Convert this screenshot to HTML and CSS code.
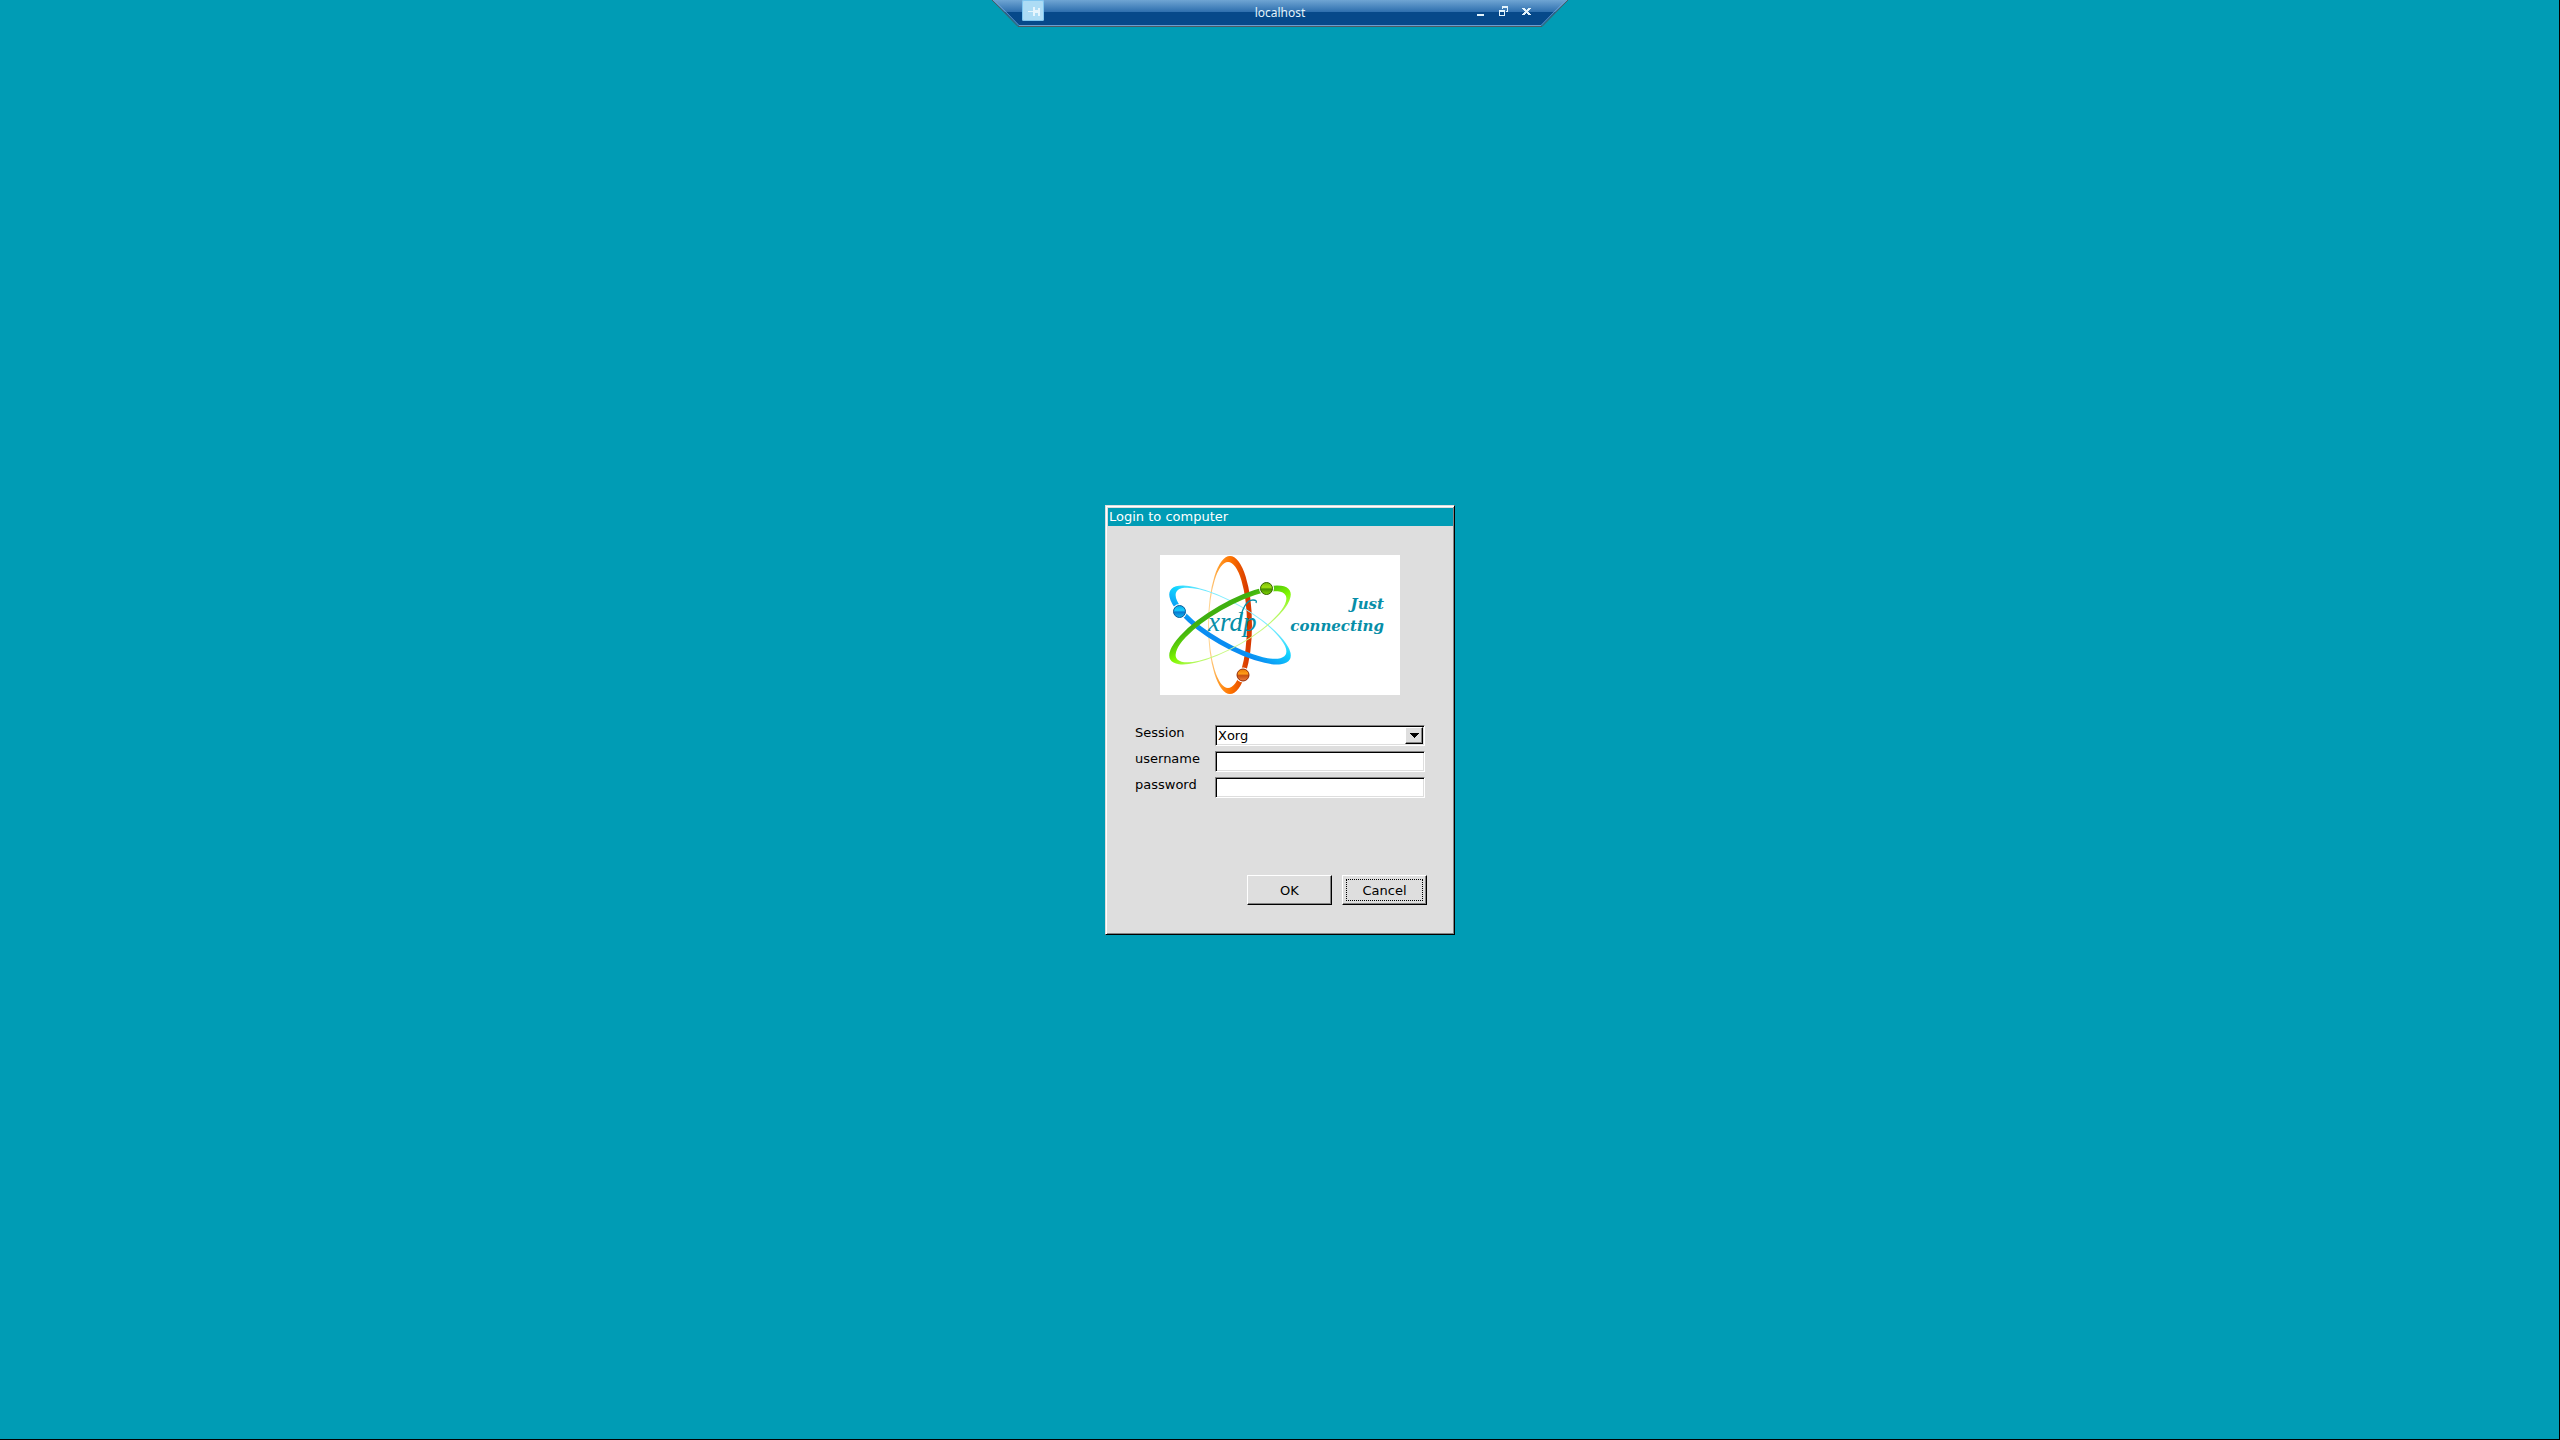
FILE: index.html
```
<!DOCTYPE html>
<html lang="en">
<head>
<meta charset="utf-8">
<title>localhost</title>
<link rel="stylesheet" href="styles.css">
</head>
<body class="desktop">
<header class="conn-bar">
  <svg class="conn-shape" viewBox="0 0 576 27" aria-hidden="true">
    <defs>
      <linearGradient id="bar" x1="0" y1="0" x2="0" y2="1">
        <stop offset="0" stop-color="#6fa5d3"/>
        <stop offset=".47" stop-color="#2e6fae"/>
        <stop offset=".47" stop-color="#06498a"/>
        <stop offset="1" stop-color="#06498a"/>
      </linearGradient>
    </defs>
    <path d="M0 0H576L550 25.500H26Z" fill="url(#bar)"/>
    <path d="M0 0L26 26.500H550L576 0" fill="none" stroke="#4d5a62"/>
    <path d="M2 0L27 25.500H549L574 0" fill="none" stroke="#6c9fd0"/>
  </svg>
  <button class="pin" type="button" aria-label="Pin the connection bar">
    <svg width="22" height="21" viewBox="0 0 22 21"><path d="M6 11h5v1H6zM11 7h2v3h3V8h2v8h-2v-3h-3v3h-2z" fill="#e6f5fd"/></svg>
  </button>
  <span class="conn-title">localhost</span>
  <div class="conn-controls">
    <button type="button" aria-label="Minimize"><svg width="9" height="10"><path d="M1 8h7v2H1z" fill="#e2f3fb"/></svg></button>
    <button type="button" aria-label="Restore"><svg width="9" height="10"><path d="M3 0h6v6H7V5h1V2H4v1H3zM0 4h6v6H0zM1 6v3h4V6z" fill="#e2f3fb" fill-rule="evenodd"/></svg></button>
    <button type="button" aria-label="Close"><svg width="9" height="10"><path d="M0 2h3v1h1v1h1V3h1V2h3v1H8v1H7v1H6v1h1v1h1v1h1v1H6V8H5V7H4v1H3v1H0V8h1V7h1V6h1V5H2V4H1V3H0z" fill="#e2f3fb"/></svg></button>
  </div>
</header>

<main class="stage">
  <form class="dialog">
    <h1 class="titlebar">Login to computer</h1>
    <svg class="logo" viewBox="0 0 240 140" role="img" aria-label="xrdp - Just connecting">
      <defs>
        <linearGradient id="orange" x1="0" y1="0" x2="1" y2="0"><stop offset="0" stop-color="#ffdca0"/><stop offset=".25" stop-color="#ff9a28"/><stop offset=".5" stop-color="#ff7500"/><stop offset=".9" stop-color="#d83a00"/></linearGradient>
        <linearGradient id="blue" x1="0" y1="0" x2="1" y2="0"><stop offset="0" stop-color="#90f0ff"/><stop offset=".4" stop-color="#10d4ff"/><stop offset=".9" stop-color="#0a8df2"/></linearGradient>
        <linearGradient id="green" x1="0" y1="0" x2="1" y2="0"><stop offset="0" stop-color="#d0f890"/><stop offset=".45" stop-color="#80f800"/><stop offset=".9" stop-color="#3fb010"/></linearGradient>
        <linearGradient id="ballB" x1="0" y1="0" x2="0" y2="1"><stop offset="0" stop-color="#08a8e8"/><stop offset=".4" stop-color="#18d0ff"/><stop offset=".55" stop-color="#0878d0"/><stop offset="1" stop-color="#10b8f0"/></linearGradient>
        <linearGradient id="ballG" x1="0" y1="0" x2="0" y2="1"><stop offset="0" stop-color="#78b808"/><stop offset=".4" stop-color="#a0e010"/><stop offset=".55" stop-color="#489000"/><stop offset="1" stop-color="#80d800"/></linearGradient>
        <linearGradient id="ballO" x1="0" y1="0" x2="0" y2="1"><stop offset="0" stop-color="#e87808"/><stop offset=".4" stop-color="#ff9c18"/><stop offset=".55" stop-color="#c85010"/><stop offset="1" stop-color="#f08040"/></linearGradient>
        <path id="orbit" fill-rule="evenodd" d="M70 1A22 69 0 0 1 70 139A22 69 0 0 1 70 1ZM68 7A19 63 0 0 0 68 133A19 63 0 0 0 68 7Z"/>
      </defs>
      <rect width="240" height="140" fill="#fff"/>
      <use href="#orbit" fill="url(#orange)"/>
      <use href="#orbit" fill="url(#blue)" transform="rotate(120 70 70)"/>
      <use href="#orbit" fill="url(#green)" transform="rotate(240 70 70)"/>
      <circle cx="19.500" cy="56.500" r="7.500" fill="#fff"/><circle cx="19.500" cy="56.500" r="6" fill="url(#ballB)" stroke="#0a5c98"/>
      <circle cx="106.500" cy="33.500" r="7.500" fill="#fff"/><circle cx="106.500" cy="33.500" r="6" fill="url(#ballG)" stroke="#356400"/>
      <circle cx="83" cy="120" r="7.500" fill="#fff"/><circle cx="83" cy="120" r="6" fill="url(#ballO)" stroke="#942c08"/>
      <text class="wordmark" x="48" y="76">xrdp</text>
      <path d="M79 69C82 53 87 45 93 45C96 45 97 46 96 48" fill="none" stroke="#078ea8" stroke-width="1.300"/>
      <text class="slogan" x="224" y="54">Just</text>
      <text class="slogan" x="224" y="76">connecting</text>
    </svg>
    <div class="fields">
      <label for="session">Session</label>
      <div class="combo">
        <select id="session"><option>Xorg</option></select>
        <span class="arrow" aria-hidden="true"><svg width="9" height="5"><path d="M0 0h9v1H8v1H7v1H6v1H5v1H4V4H3V3H2V2H1V1H0z"/></svg></span>
      </div>
      <label for="username">username</label>
      <input id="username" type="text">
      <label for="password">password</label>
      <input id="password" type="password">
    </div>
    <div class="actions">
      <button class="push" type="submit">OK</button>
      <button class="push focused" type="button">Cancel</button>
    </div>
  </form>
</main>
</body>
</html>
```
FILE: styles.css
```
* { box-sizing: border-box; }

.desktop {
  margin: 0;
  min-height: 100vh;
  display: flex;
  background: #009cb5;
  box-shadow: inset -1px -1px #000;
  font: 13px/16px "DejaVu Sans", sans-serif;
  color: #000;
}

.conn-bar {
  position: absolute;
  top: 0;
  left: 50%;
  transform: translateX(-50%);
  width: 576px;
  height: 27px;
  padding: 0 37px 0 30px;
  display: flex;
  justify-content: space-between;
  align-items: flex-start;
}
.conn-shape { position: absolute; inset: 0; width: 100%; height: 100%; }
.conn-bar button { position: relative; padding: 0; border: 0; background: none; }
.conn-bar svg { display: block; }
.conn-bar .pin {
  background: #addcf5;
  box-shadow: inset 0 0 0 1px #7fc6f0;
  border-radius: 2px;
}
.conn-title {
  position: absolute;
  inset: 5px 0 auto;
  text-align: center;
  font: 12px/16px "Noto Sans", sans-serif;
  color: #e2f3fb;
}
.conn-controls { display: flex; gap: 14px; padding-top: 6px; }

.stage { flex: 1; display: flex; align-items: center; justify-content: center; }

.dialog {
  width: 350px;
  padding: 1px 0 29px 1px;
  background: #dedede;
  border: 1px solid #fff;
  border-color: #dedede #000 #000 #dedede;
  box-shadow: inset 1px 1px #fff, inset -1px -1px #848484;
}
.titlebar {
  margin: 1px 1px 0;
  padding: 1px;
  font-size: 13px;
  font-weight: 400;
  line-height: 16px;
  color: #fff;
  background: #009cb5;
}
.logo { display: block; width: 240px; margin: 29px auto 30px 53px; }
.wordmark { font: italic 27px "Liberation Serif", serif; fill: #078ea8; }
.slogan { font: italic bold 15px "DejaVu Serif", serif; fill: #078ea8; text-anchor: end; }

.fields {
  display: grid;
  grid-template-columns: 80px 210px;
  row-gap: 5px;
  margin-left: 28px;
}
.fields input, .combo {
  width: 100%;
  height: 21px;
  border: 1px solid #848484;
  border-color: #848484 #fff #fff #848484;
  border-radius: 0;
  background: #fff;
  box-shadow: inset 1px 1px #000, inset -1px -1px #dedede;
  padding: 1px;
  outline: 0;
  font: inherit;
}
.combo { display: flex; }
.combo select {
  flex: 1;
  appearance: none;
  border: 0;
  padding: 0 1px;
  background: none;
  color: #000;
  font: inherit;
}
.arrow {
  width: 18px;
  height: 17px;
  display: grid;
  place-items: center;
  pointer-events: none;
}
.arrow, .push {
  background: #dedede;
  border: 1px solid #fff;
  border-color: #fff #000 #000 #fff;
  box-shadow: inset -1px -1px #848484;
}

.actions { display: flex; justify-content: flex-end; gap: 10px; margin: 77px 27px 0 0; }
.push {
  position: relative;
  width: 85px;
  height: 30px;
  padding: 2px 0 0;
  border-radius: 0;
  font: inherit;
  color: #000;
}
.focused::after {
  content: "";
  position: absolute;
  inset: 3px;
  border: 1px dotted #000;
}
```
